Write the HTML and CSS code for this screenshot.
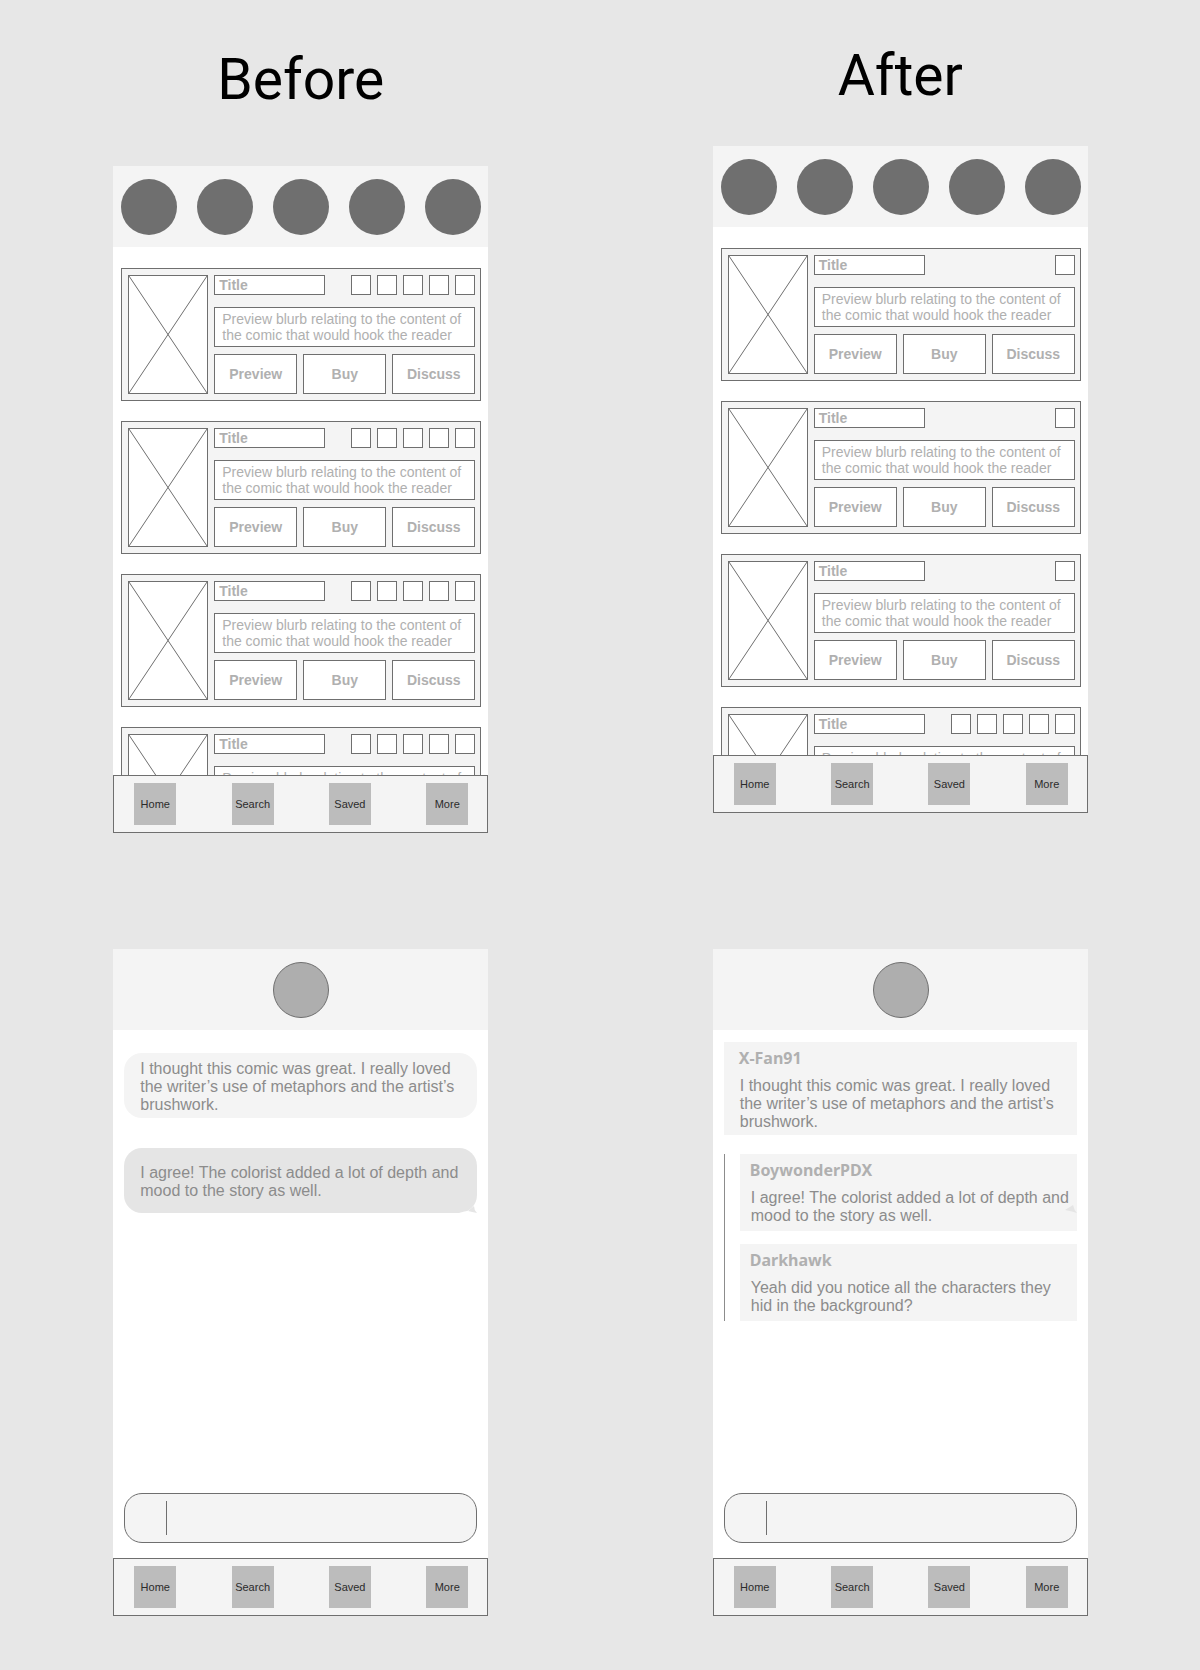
FILE: index.html
```html
<!DOCTYPE html>
<html lang="en">
<head>
<meta charset="utf-8">
<meta name="viewport" content="width=device-width, initial-scale=1">
<title>Comic reader wireframes</title>
<link rel="stylesheet" href="styles.css">
<script src="app.js" defer></script>
</head>
<body>
<main class="board">
  <section class="column column-before">
    <h1 class="heading">Before</h1>
    <article class="phone" data-feed="5,5,5,5"></article>
  </section>
  <section class="column column-after">
    <h1 class="heading">After</h1>
    <article class="phone" data-feed="1,1,1,5"></article>
  </section>
  <section class="column">
    <article class="phone" data-chat>
      <header class="topbar"><span class="avatar avatar-light"></span></header>
      <div class="bubbles">
        <p class="bubble">I thought this comic was great. I really loved the writer’s use of metaphors and the artist’s brushwork.</p>
        <p class="bubble bubble-own">I agree! The colorist added a lot of depth and mood to the story as well.
          <svg class="tail" viewBox="0 0 18 10" aria-hidden="true"><path d="M0 10Q6 8 9 8Q13 9 18 10V0Q18 1 15 3Q15 7 18 10Z" fill="#fff"/><path d="M9 8L15 3Q15 7 18 10Q13 9 9 8Z" fill="#e5e5e5"/></svg>
        </p>
      </div>
    </article>
  </section>
  <section class="column">
    <article class="phone" data-chat>
      <header class="topbar"><span class="avatar avatar-light"></span></header>
      <div class="comments">
        <section class="comment comment-root">
          <h2 class="author">X-Fan91</h2>
          <p class="message">I thought this comic was great. I really loved the writer’s use of metaphors and the artist’s brushwork.</p>
        </section>
        <div class="thread">
          <section class="comment">
            <h2 class="author">BoywonderPDX</h2>
            <p class="message">I agree! The colorist added a lot of depth and mood to the story as well.</p>
            <svg class="marker" viewBox="0 0 12 8" aria-hidden="true"><path d="M0 5L8 0Q9 5 12 8Q6 6 0 5Z" fill="#e5e5e5"/></svg>
          </section>
          <section class="comment">
            <h2 class="author">Darkhawk</h2>
            <p class="message">Yeah did you notice all the characters they hid in the background?</p>
          </section>
        </div>
      </div>
    </article>
  </section>
</main>
</body>
</html>
```

FILE: styles.css
```css
* { box-sizing: border-box; }

body {
  margin: 0;
  background: #e7e7e7;
  font-family: "Liberation Sans", Arial, sans-serif;
}

h1, h2, p { margin: 0; }

.board {
  display: grid;
  grid-template-columns: repeat(2, minmax(375px, 1fr));
  row-gap: 116px;
  padding: 42px 0 54px 1px;
}

.column {
  display: flex;
  flex-direction: column;
  align-items: center;
}

.heading {
  font: 400 57px/68px Roboto, sans-serif;
  color: #000;
}

.column-before { padding-top: 4px; gap: 52px; }
.column-after { gap: 36px; }

.phone {
  display: flex;
  flex-direction: column;
  width: 375px;
  height: 667px;
  overflow: hidden;
  background: #fff;
}

.topbar {
  display: flex;
  flex-shrink: 0;
  justify-content: center;
  gap: 20px;
  padding: 13px 7px 12px 8px;
  background: #f4f4f4;
}

.avatar {
  width: 56px;
  height: 56px;
  border-radius: 50%;
  background: #6f6f6f;
}

.avatar-light {
  border: 1px solid #6f6f6f;
  background: #aeaeae;
}

/* Comic list */

.feed {
  display: flex;
  flex: 1;
  flex-direction: column;
  gap: 20px;
  min-height: 0;
  padding: 21px 7px 0 8px;
  overflow: hidden;
}

.card {
  display: flex;
  flex-shrink: 0;
  gap: 6px;
  padding: 6px 5px 6px 6px;
  border: 1px solid #6f6f6f;
  background: #f4f4f4;
}

.cover {
  width: 80px;
  height: 119px;
  border: 1px solid #6f6f6f;
  background: #fff;
  stroke: #6f6f6f;
}

.details {
  display: flex;
  flex: 1;
  flex-direction: column;
}

.title-row {
  display: flex;
  justify-content: space-between;
  margin-bottom: 12px;
}

.title {
  width: 111px;
  height: 20px;
  padding-left: 4px;
  border: 1px solid #6f6f6f;
  background: #fff;
  color: #b0b0b0;
  font-size: 14px;
  line-height: 18px;
}

.icons {
  display: flex;
  gap: 6px;
}

.icon {
  width: 20px;
  height: 20px;
  padding: 0;
  border: 1px solid #6f6f6f;
  background: #fff;
}

.blurb {
  margin-bottom: 7px;
  padding: 3px 0 3px 7px;
  border: 1px solid #6f6f6f;
  background: #fff;
  color: #b0b0b0;
  font-size: 14px;
  line-height: 16px;
}

.actions {
  display: grid;
  grid-template-columns: repeat(3, 1fr);
  gap: 6px;
}

.action {
  height: 40px;
  padding: 0;
  border: 1px solid #6f6f6f;
  background: #fff;
  color: #b0b0b0;
  font: bold 14px/16px "Liberation Sans", Arial, sans-serif;
}

/* Bottom navigation */

.tabs {
  display: flex;
  flex-shrink: 0;
  justify-content: space-between;
  padding: 7px 19px 7px 20px;
  border: 1px solid #6f6f6f;
  background: #f4f4f4;
}

.tab {
  width: 42px;
  height: 42px;
  background: #bcbcbc;
  color: #2b2b2b;
  font-size: 11px;
  line-height: 42px;
  text-align: center;
  text-decoration: none;
}

/* Chat */

.bubbles {
  display: flex;
  flex: 1;
  flex-direction: column;
  gap: 30px;
  padding: 23px 11px 0;
}

.bubble, .message {
  color: #8c8c8c;
  font-size: 16px;
  line-height: 18px;
}

.bubble {
  position: relative;
  padding: 7px 12px 4px 16px;
  border-radius: 18px;
  background: #f4f4f4;
}

.bubble-own {
  padding-top: 16px;
  padding-bottom: 13px;
  background: #e5e5e5;
}

.tail {
  position: absolute;
  right: 0;
  bottom: 0;
  width: 18px;
  height: 10px;
}

.comments {
  display: flex;
  flex: 1;
  flex-direction: column;
  gap: 19px;
  padding: 12px 11px 0;
}

.comment {
  position: relative;
  padding: 5px 4px 6px 10px;
  background: #f4f4f4;
}

.comment-root { padding-left: 15px; padding-bottom: 4px; }

.author {
  color: #b0b0b0;
  font: bold 16px/22px "Noto Sans", sans-serif;
}

.message { padding: 8px 0 0 1px; }

.thread {
  display: flex;
  flex-direction: column;
  gap: 13px;
  padding-left: 15px;
  border-left: 1px solid #8c8c8c;
}

.marker {
  position: absolute;
  right: 0;
  bottom: 18px;
  width: 12px;
  height: 8px;
}

.composer {
  display: flex;
  flex-shrink: 0;
  align-items: center;
  height: 50px;
  margin: 0 11px 15px;
  padding-left: 41px;
  border: 1px solid #6f6f6f;
  border-radius: 18px;
  background: #f4f4f4;
}

.caret {
  width: 1px;
  height: 34px;
  background: #6f6f6f;
}

.field {
  flex: 1;
  min-width: 0;
  height: 34px;
  padding: 0 16px 0 8px;
  border: 0;
  outline: 0;
  background: none;
  color: #8c8c8c;
  font: 16px/18px "Liberation Sans", Arial, sans-serif;
}
```

FILE: app.js
```js
const repeat = (count, html) => html.repeat(count);

const actions = `
  <div class="actions">
    <button class="action" type="button">Preview</button>
    <button class="action" type="button">Buy</button>
    <button class="action" type="button">Discuss</button>
  </div>`;

// The last card only peeks out above the navigation, so it has no actions.
const card = (icons, index, all) => `
  <section class="card">
    <svg class="cover" viewBox="0 0 78 117" aria-hidden="true"><path d="M0 0L78 117M78 0L0 117"/></svg>
    <div class="details">
      <div class="title-row">
        <h2 class="title">Title</h2>
        <div class="icons">${repeat(Number(icons), '<button class="icon" type="button" aria-label="Option"></button>')}</div>
      </div>
      <p class="blurb">Preview blurb relating to the content of the comic that would hook the reader</p>
      ${index < all.length - 1 ? actions : ''}
    </div>
  </section>`;

const tabs = `
  <nav class="tabs">
    ${['Home', 'Search', 'Saved', 'More'].map((name) => `<a class="tab" href="#">${name}</a>`).join('')}
  </nav>`;

const composer = `
  <label class="composer"><span class="caret"></span><input class="field" type="text" aria-label="Message"></label>`;

document.querySelectorAll('[data-feed]').forEach((phone) => {
  phone.innerHTML = `
    <header class="topbar">${repeat(5, '<span class="avatar"></span>')}</header>
    <div class="feed">${phone.dataset.feed.split(',').map(card).join('')}</div>
    ${tabs}`;
});

document.querySelectorAll('[data-chat]').forEach((phone) => {
  phone.insertAdjacentHTML('beforeend', composer + tabs);
});
```
